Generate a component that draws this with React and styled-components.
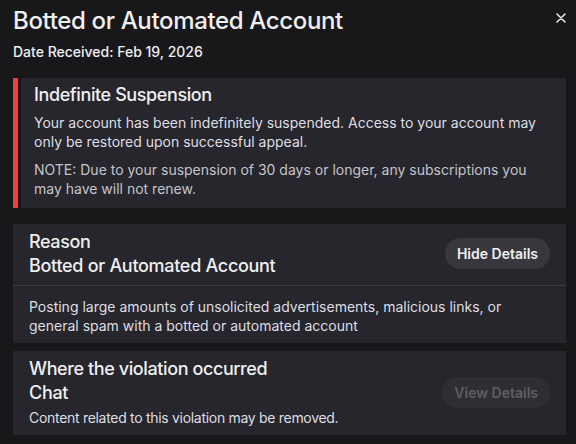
import React from "react";
import styled, { createGlobalStyle } from "styled-components";

const GlobalStyle = createGlobalStyle`
  html, body {
    margin: 0;
    padding: 0;
    background: #18181b;
  }
  body {
    font-family: Inter, "Noto Sans", sans-serif;
    color: #efeff1;
    -webkit-font-smoothing: antialiased;
  }
  * { box-sizing: border-box; }
`;

const Page = styled.div`
  width: 576px;
  height: 444px;
  padding: 6px 10px 0 13px;
  overflow: hidden;
`;

const Header = styled.div`
  display: flex;
  justify-content: space-between;
  align-items: flex-start;
`;

const Title = styled.h1`
  margin: 0;
  font-size: 24px;
  line-height: 30px;
  font-weight: 500;
  letter-spacing: -0.35px;
  color: #efeff1;
`;

const CloseButton = styled.button`
  display: flex;
  align-items: center;
  justify-content: flex-end;
  width: 20px;
  height: 20px;
  margin-top: 2px;
  padding: 0;
  border: none;
  background: transparent;
  color: #efeff1;
  cursor: pointer;
`;

const DateLine = styled.div`
  margin-top: 6px;
  font-size: 14px;
  line-height: 20px;
  font-weight: 500;
  color: #efeff1;
`;

const Stack = styled.div`
  display: flex;
  flex-direction: column;
  margin-top: 16px;
`;

const Alert = styled.div`
  display: flex;
  gap: 3px;
  margin-bottom: 16px;
`;

const AlertBar = styled.div`
  width: 5px;
  flex: none;
  background: #f23f44;
`;

const AlertBody = styled.div`
  flex: 1;
  background: #26262c;
  padding: 6px 12px 9px 13px;
`;

const AlertTitle = styled.div`
  font-size: 18px;
  line-height: 22px;
  font-weight: 500;
  letter-spacing: -0.4px;
  color: #efeff1;
`;

const Para = styled.p`
  margin: ${(p) => (p.$first ? "8px" : "10px")} 0 0;
  font-size: 14px;
  line-height: 18.7px;
  font-weight: 400;
  color: ${(p) => (p.$muted ? "#c4c4cb" : "#dedee3")};
`;

const Card = styled.div`
  background: #26262c;
  margin-bottom: ${(p) => p.$gap || 0}px;
`;

const CardHead = styled.div`
  display: flex;
  align-items: center;
  justify-content: space-between;
  padding: 6px 16px 7px 16px;
  border-bottom: ${(p) => (p.$divider ? "1px solid #3c3c42" : "none")};
`;

const HeadText = styled.div`
  display: flex;
  flex-direction: column;
`;

const Label = styled.div`
  font-size: 18px;
  line-height: 24px;
  font-weight: 500;
  letter-spacing: -0.4px;
  color: #efeff1;
`;

const Value = styled.div`
  font-size: 18px;
  line-height: 24px;
  font-weight: 500;
  letter-spacing: -0.3px;
  color: #efeff1;
`;

const Note = styled.div`
  margin-top: 3px;
  font-size: 14px;
  line-height: 20px;
  letter-spacing: -0.3px;
  color: #dedee3;
`;

const PillButton = styled.button`
  flex: none;
  height: 31px;
  padding: 0 12px;
  border: none;
  border-radius: 16px;
  font-family: Inter, "Noto Sans", sans-serif;
  font-size: 14px;
  font-weight: 600;
  background: ${(p) => (p.disabled ? "#2e2e33" : "#37373d")};
  color: ${(p) => (p.disabled ? "#5e5e64" : "#efeff1")};
  cursor: ${(p) => (p.disabled ? "default" : "pointer")};
`;

const CardBody = styled.div`
  padding: 12px 16px 8px 16px;
  font-size: 14px;
  line-height: 18.7px;
  color: #dedee3;
`;

export default function App() {
  return (
    <>
      <GlobalStyle />
      <Page>
        <Header>
          <Title>Botted or Automated Account</Title>
          <CloseButton aria-label="Close">
            <svg width="10" height="10" viewBox="0 0 10 10" fill="none">
              <path d="M1 1 L9 9 M9 1 L1 9" stroke="currentColor" strokeWidth="1.5" strokeLinecap="round" />
            </svg>
          </CloseButton>
        </Header>
        <DateLine>Date Received: Feb 19, 2026</DateLine>
        <Stack>
          <Alert>
            <AlertBar />
            <AlertBody>
              <AlertTitle>Indefinite Suspension</AlertTitle>
              <Para $first>
                Your account has been indefinitely suspended. Access to your account may only be
                restored upon successful appeal.
              </Para>
              <Para $muted>
                NOTE: Due to your suspension of 30 days or longer, any subscriptions you may have
                will not renew.
              </Para>
            </AlertBody>
          </Alert>
          <Card $gap={8}>
            <CardHead $divider>
              <HeadText>
                <Label>Reason</Label>
                <Value>Botted or Automated Account</Value>
              </HeadText>
              <PillButton>Hide Details</PillButton>
            </CardHead>
            <CardBody>
              Posting large amounts of unsolicited advertisements, malicious links, or general spam
              with a botted or automated account
            </CardBody>
          </Card>
          <Card>
            <CardHead>
              <HeadText>
                <Label>Where the violation occurred</Label>
                <Value>Chat</Value>
                <Note>Content related to this violation may be removed.</Note>
              </HeadText>
              <PillButton disabled>View Details</PillButton>
            </CardHead>
          </Card>
        </Stack>
      </Page>
    </>
  );
}
